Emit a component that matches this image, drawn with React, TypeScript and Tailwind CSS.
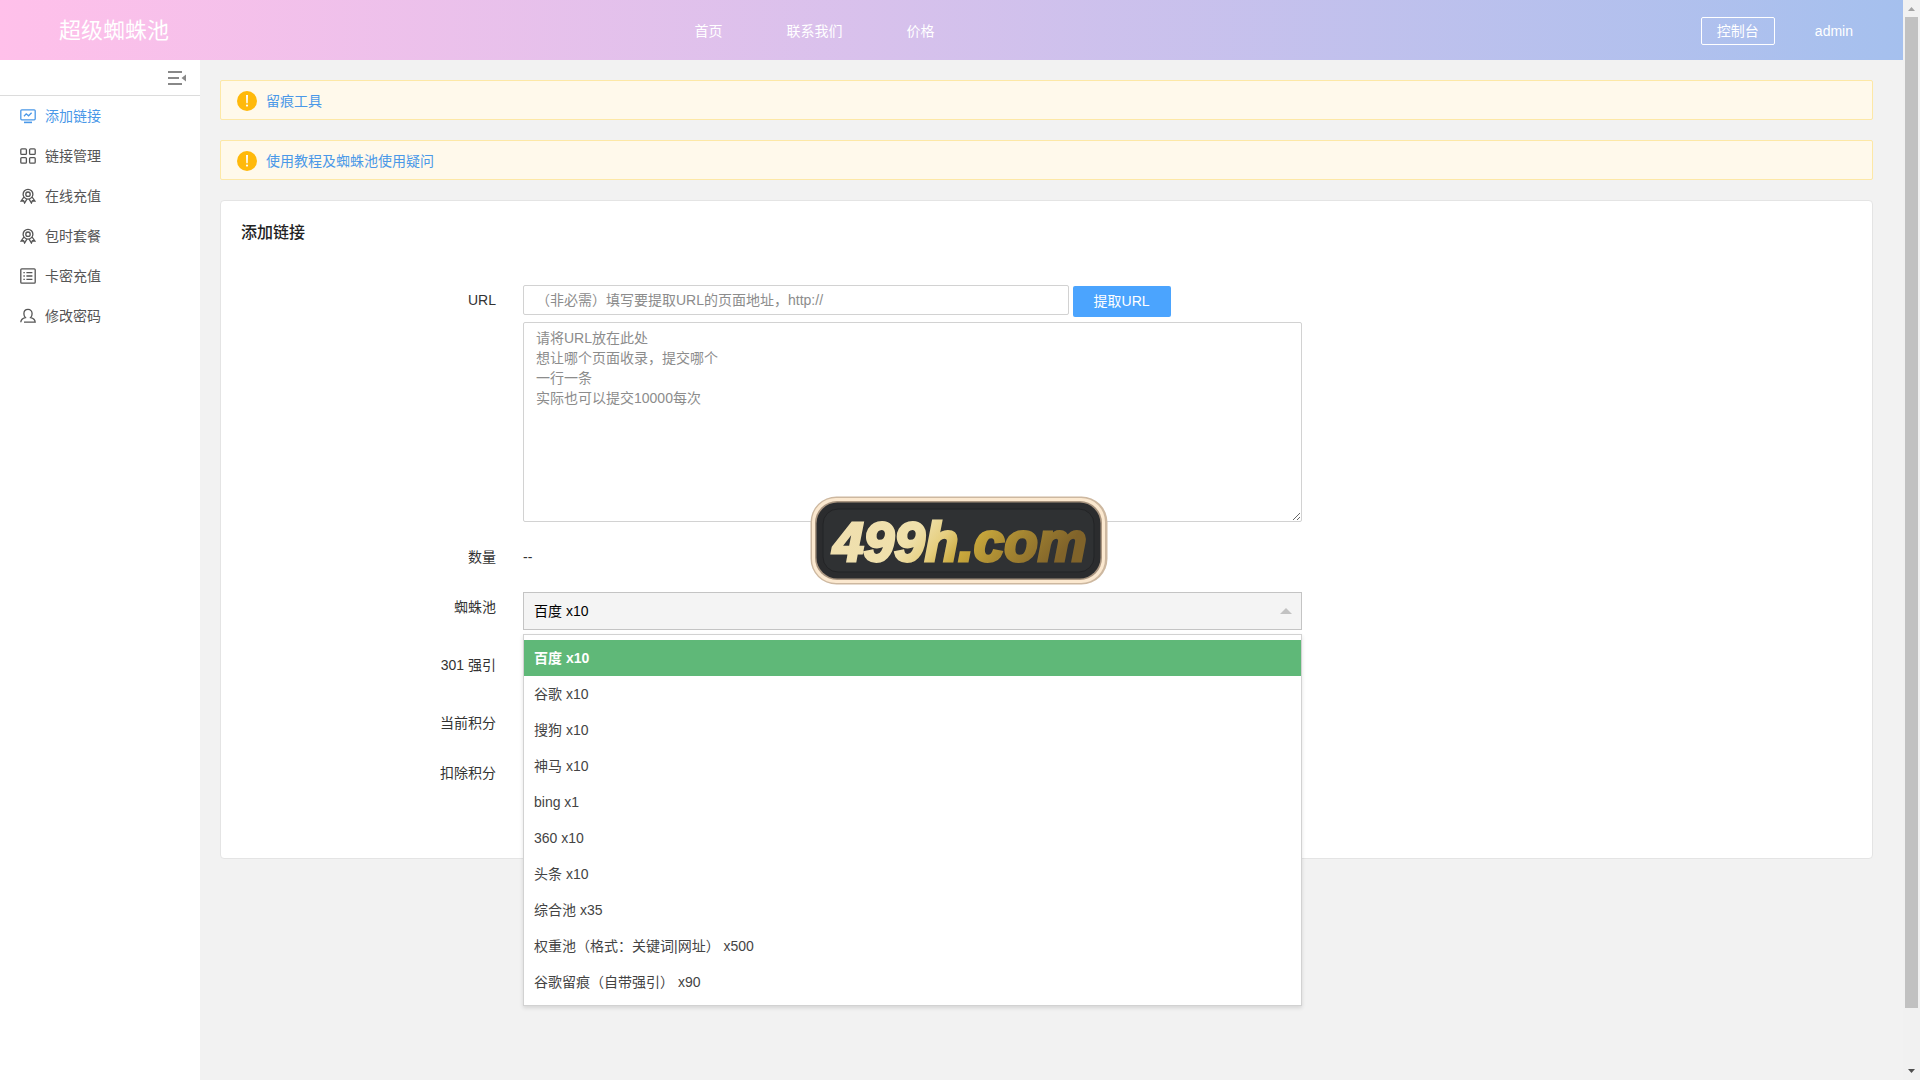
import { useState } from 'react';

const MENU = [
  { label: '添加链接', icon: 'monitor' },
  { label: '链接管理', icon: 'grid' },
  { label: '在线充值', icon: 'medal' },
  { label: '包时套餐', icon: 'medal' },
  { label: '卡密充值', icon: 'list' },
  { label: '修改密码', icon: 'user' },
];

const NOTICES = ['留痕工具', '使用教程及蜘蛛池使用疑问'];

const POOLS = [
  '百度 x10',
  '谷歌 x10',
  '搜狗 x10',
  '神马 x10',
  'bing x1',
  '360 x10',
  '头条 x10',
  '综合池 x35',
  '权重池（格式：关键词|网址） x500',
  '谷歌留痕（自带强引） x90',
];

const URL_HINT = '请将URL放在此处\n想让哪个页面收录，提交哪个\n一行一条\n实际也可以提交10000每次';

function MenuIcon({ name }: { name: string }) {
  return (
    <svg width="16" height="16" viewBox="0 0 16 16" fill="none" stroke="currentColor" strokeWidth="1.3" className="shrink-0">
      {name === 'monitor' && (
        <>
          <rect x="0.8" y="1.8" width="14.4" height="10" rx="1" />
          <path d="M4 8.2l2.2-2.4 2.4 2 3-3" />
          <path d="M4 14.4h8" strokeWidth="1.6" />
        </>
      )}
      {name === 'grid' && (
        <>
          <rect x="0.8" y="0.8" width="5.6" height="5.6" rx="1" />
          <rect x="9.6" y="0.8" width="5.6" height="5.6" rx="1" />
          <rect x="0.8" y="9.6" width="5.6" height="5.6" rx="1" />
          <rect x="9.6" y="9.6" width="5.6" height="5.6" rx="1" />
        </>
      )}
      {name === 'medal' && (
        <>
          <circle cx="8" cy="6.2" r="4.9" />
          <circle cx="8" cy="6.2" r="2.2" />
          <path d="M3.9 9L1.2 13l2.4-.2 1 2.2 2.3-3.9M12.1 9l2.7 4-2.4-.2-1 2.2-2.3-3.9" />
        </>
      )}
      {name === 'list' && (
        <>
          <rect x="0.8" y="0.8" width="14.4" height="14.4" rx="1" />
          <path d="M3.4 4.6h1.4M3.4 8h1.4M3.4 11.4h1.4M6.4 4.6h6M6.4 8h6M6.4 11.4h6" />
        </>
      )}
      {name === 'user' && (
        <path d="M4 14.2h11.2c-.2-2.6-1.8-4-4.6-4.6 1-1 1.5-2.2 1.5-3.9 0-2.6-1.6-4.3-4.1-4.3S3.9 3.1 3.9 5.7c0 1.7.5 2.9 1.5 3.9C2.6 10.2 1 11.6.8 14.2" />
      )}
    </svg>
  );
}

function Header() {
  return (
    <header className="flex h-[60px] shrink-0 items-center bg-linear-to-r from-[#ffc0ea] to-[#a5c0ee] pt-[2px] text-sm text-white">
      <div className="w-[36.5%] pl-[59px]">
        <a href="#home" className="text-[22px]">超级蜘蛛池</a>
      </div>
      <nav className="flex gap-16">
        <a href="#home">首页</a>
        <a href="#contact">联系我们</a>
        <a href="#price">价格</a>
      </nav>
      <div className="mr-[50px] flex flex-1 items-center justify-end gap-10">
        <a href="#console" className="flex h-7 w-[74px] items-center justify-center rounded-xs border border-white">控制台</a>
        <a href="#admin">admin</a>
      </div>
    </header>
  );
}

function Sidebar() {
  return (
    <aside className="w-[200px] shrink-0 bg-white">
      <div className="flex h-9 items-center justify-end border-b border-[#dcdcdc] pr-[14px]">
        <button aria-label="收起菜单">
          <svg width="18" height="16" viewBox="0 0 18 16" fill="#888">
            <rect y="1" width="14" height="2" />
            <rect y="7" width="11" height="2" />
            <rect y="13" width="14" height="2" />
            <path d="M18 4.5v7L13.5 8z" />
          </svg>
        </button>
      </div>
      <nav>
        {MENU.map((item, i) => (
          <a
            key={item.label}
            href="#menu"
            className={`flex h-10 items-center gap-[9px] pl-5 text-sm ${i === 0 ? 'text-[#4a98e8]' : 'text-[#555]'}`}
          >
            <MenuIcon name={item.icon} />
            {item.label}
          </a>
        ))}
      </nav>
    </aside>
  );
}

function Notice({ text }: { text: string }) {
  return (
    <div className="flex h-10 items-center gap-[9px] rounded-xs border border-[#fde8a6] bg-[#fff9eb] px-4 pt-[2px] text-sm">
      <svg width="20" height="20" viewBox="0 0 20 20" className="shrink-0">
        <circle cx="10" cy="10" r="10" fill="#ffb90b" />
        <path d="M9 4h2l-.3 8.200H9.300z" fill="#fff" />
        <circle cx="10" cy="14.6" r="1.1" fill="#fff" />
      </svg>
      <a href="#notice" className="text-[#4a98e8]">{text}</a>
    </div>
  );
}

function PoolSelect() {
  const [value, setValue] = useState(POOLS[0]);
  const [open, setOpen] = useState(true);

  return (
    <div className="relative">
      <select
        id="pool"
        value={value}
        onChange={(e) => setValue(e.target.value)}
        onMouseDown={(e) => {
          e.preventDefault();
          setOpen(!open);
        }}
        className="block h-[38px] w-full appearance-none border border-[#c4c4c4] bg-[#f4f4f4] px-[10px] text-sm text-black"
      >
        {POOLS.map((pool) => (
          <option key={pool}>{pool}</option>
        ))}
      </select>
      <span className="pointer-events-none absolute top-4 right-[10px] border-x-6 border-b-6 border-x-transparent border-b-[#c2c2c2]" />
      {open && (
        <ul role="listbox" aria-label="蜘蛛池" className="absolute top-[42px] left-0 z-10 w-full border border-[#d2d2d2] bg-white py-[5px] shadow-[0_2px_4px_rgba(0,0,0,0.12)]">
          {POOLS.map((pool) => (
            <li
              key={pool}
              role="option"
              aria-selected={pool === value}
              onClick={() => {
                setValue(pool);
                setOpen(false);
              }}
              className={`h-9 cursor-pointer px-[10px] leading-9 ${pool === value ? 'bg-[#5fb878] font-bold text-white' : 'text-[#444]'}`}
            >
              {pool}
            </li>
          ))}
        </ul>
      )}
    </div>
  );
}

function LinkForm() {
  const row = 'grid grid-cols-[282px_780fr_550fr]';
  const label = 'pr-[27px] text-right leading-[30px] text-[#333]';

  return (
    <section className="rounded-sm border border-[#e4e4e4] bg-white px-5 pb-[70px] text-sm">
      <h1 className="mt-[17px] text-base leading-[30px] font-medium text-[#222]">添加链接</h1>
      <form className="mt-[37px]" onSubmit={(e) => e.preventDefault()}>
        <div className={row}>
          <label htmlFor="source" className={label}>URL</label>
          <div>
            <div className="flex gap-1">
              <input
                id="source"
                type="text"
                placeholder="（非必需）填写要提取URL的页面地址，http://"
                className="h-[30px] w-[70%] rounded-xs border border-[#d2d2d2] px-3 placeholder:text-[#8c8c8c]"
              />
              <button className="mt-px h-[31px] w-[98px] rounded-xs bg-[#4ba4fe] pb-[2px] text-white">提取URL</button>
            </div>
            <textarea
              aria-label="URL列表"
              placeholder={URL_HINT}
              className="mt-[5px] block h-[200px] w-full rounded-xs border border-[#d2d2d2] px-3 py-[5px] leading-5 placeholder:text-[#8c8c8c]"
            />
          </div>
        </div>
        <div className={`${row} mt-5`}>
          <span className={label}>数量</span>
          <output className="leading-[30px] text-[#333]">--</output>
        </div>
        <div className={`${row} mt-5`}>
          <label htmlFor="pool" className={label}>蜘蛛池</label>
          <PoolSelect />
        </div>
        <div className={`${row} mt-5`}>
          <span className={label}>301 强引</span>
        </div>
        <div className={`${row} mt-7`}>
          <span className={label}>当前积分</span>
        </div>
        <div className={`${row} mt-5`}>
          <span className={label}>扣除积分</span>
        </div>
      </form>
    </section>
  );
}

function ScrollBar() {
  return (
    <div className="flex w-[17px] shrink-0 flex-col items-center bg-[#f1f1f1]">
      <svg width="17" height="17" viewBox="0 0 17 17">
        <path d="M5 11l3.500-4L12 11z" fill="#a3a3a3" />
      </svg>
      <div className="w-full flex-1 px-[2px]">
        <div className="h-[94.7%] w-full bg-[#c1c1c1]" />
      </div>
      <svg width="17" height="17" viewBox="0 0 17 17">
        <path d="M5 6l3.500 4L12 6z" fill="#505050" />
      </svg>
    </div>
  );
}

// gold plate that floats over the middle of the window
function Badge() {
  return (
    <div className="pointer-events-none fixed inset-0 z-20 flex items-center justify-center">
      <svg width="300" height="92" viewBox="0 -2 300 92">
        <defs>
          <linearGradient id="gold" x1="0" x2="1" y1="0" y2="0.2">
            <stop offset="0" stopColor="#f0dfb0" />
            <stop offset="0.38" stopColor="#efe0ab" />
            <stop offset="0.5" stopColor="#e6cf80" />
            <stop offset="0.62" stopColor="#c9a83c" />
            <stop offset="0.8" stopColor="#a38431" />
            <stop offset="1" stopColor="#80632a" />
          </linearGradient>
        </defs>
        <rect x="0.5" y="0.5" width="297" height="88" rx="26" fill="#cdb8a0" />
        <rect x="2" y="2" width="293" height="85" rx="24" fill="#fbe8cf" />
        <rect x="5" y="5" width="287" height="79" rx="22" fill="#a8947f" />
        <rect x="6.5" y="6.5" width="284" height="76" rx="21" fill="#2b2c2e" />
        <rect x="13" y="13" width="271" height="63" rx="15" fill="#2f3133" stroke="#232426" />
        <text
          x="23"
          y="65"
          fontFamily="'Liberation Sans', sans-serif"
          fontSize="55"
          fontWeight="700"
          fontStyle="italic"
          fill="url(#gold)"
          stroke="url(#gold)"
          strokeWidth="3"
        >
          499h.com
        </text>
      </svg>
    </div>
  );
}

export default function App() {
  return (
    <div className="flex min-h-screen bg-[#f2f2f2] font-['Liberation_Sans','Noto_Sans_CJK_SC',sans-serif]">
      <div className="flex min-w-0 flex-1 flex-col">
        <Header />
        <div className="flex flex-1">
          <Sidebar />
          <main className="flex min-w-0 flex-1 flex-col gap-5 pt-5 pr-[30px] pl-5">
            {NOTICES.map((text) => (
              <Notice key={text} text={text} />
            ))}
            <LinkForm />
          </main>
        </div>
      </div>
      <ScrollBar />
      <Badge />
    </div>
  );
}
